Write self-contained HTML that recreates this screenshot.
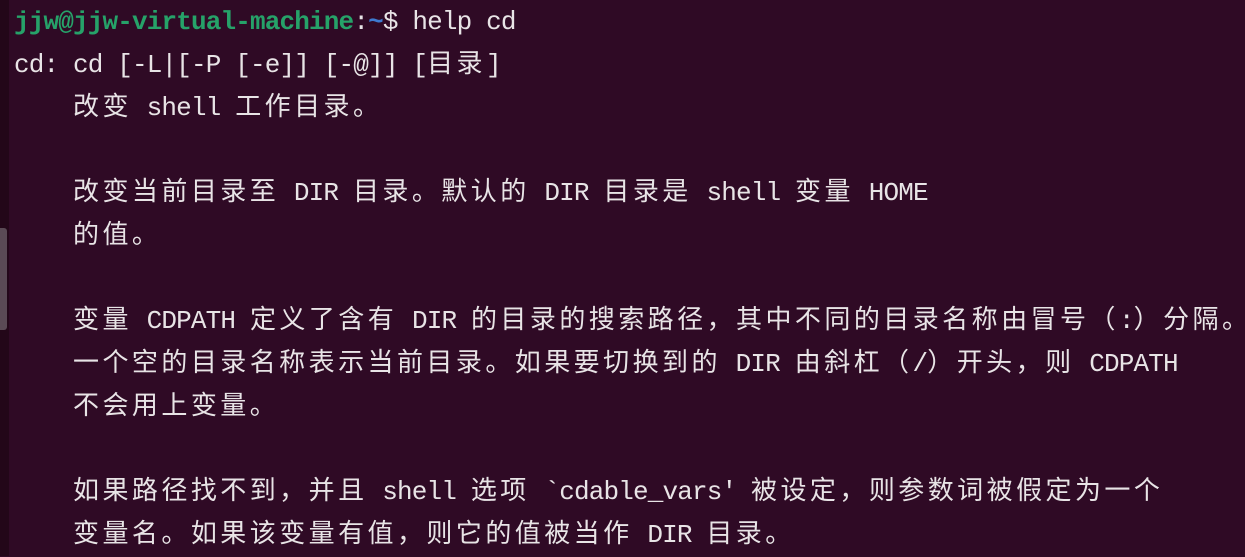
<!DOCTYPE html>
<html><head><meta charset="utf-8"><style>
html,body{margin:0;padding:0;}
body{width:1245px;height:556px;overflow:hidden;background:#2f0a25;position:relative;}
.sb{position:absolute;left:0;top:0;width:9px;height:556px;background:#230719;}
.th{position:absolute;left:0;top:228px;width:7px;height:102px;background:#5a4a55;border-radius:0 3px 3px 0;}
.t{position:absolute;left:14px;top:1px;font-family:"Liberation Mono",monospace;font-size:26px;letter-spacing:-0.85px;color:#e8e4e6;white-space:normal;}
.t div{height:42.75px;line-height:42.75px;overflow:visible;white-space:pre;}
.c{font-family:"Noto Sans CJK SC","WenQuanYi Zen Hei",sans-serif;font-weight:normal;font-size:26px;letter-spacing:3.45px;line-height:0;}
.g{color:#26a269;font-weight:bold;}
.b{color:#3d7ad0;font-weight:bold;}
</style></head><body>
<div class="sb"></div><div class="th"></div>
<div class="t"><div><span class="g">jjw@jjw-virtual-machine</span>:<span class="b">~</span>$ help cd</div><div>cd: cd [-L|[-P [-e]] [-@]] [<b class="c">目录</b>]</div><div>    <b class="c">改变</b> shell <b class="c">工作目录。</b></div><div> </div><div>    <b class="c">改变当前目录至</b> DIR <b class="c">目录。默认的</b> DIR <b class="c">目录是</b> shell <b class="c">变量</b> HOME</div><div>    <b class="c">的值。</b></div><div> </div><div>    <b class="c">变量</b> CDPATH <b class="c">定义了含有</b> DIR <b class="c">的目录的搜索路径，其中不同的目录名称由冒号（</b>:<b class="c">）分隔。</b></div><div>    <b class="c">一个空的目录名称表示当前目录。如果要切换到的</b> DIR <b class="c">由斜杠（</b>/<b class="c">）开头，则</b> CDPATH</div><div>    <b class="c">不会用上变量。</b></div><div> </div><div>    <b class="c">如果路径找不到，并且</b> shell <b class="c">选项</b> `cdable_vars' <b class="c">被设定，则参数词被假定为一个</b></div><div>    <b class="c">变量名。如果该变量有值，则它的值被当作</b> DIR <b class="c">目录。</b></div></div>
</body></html>
